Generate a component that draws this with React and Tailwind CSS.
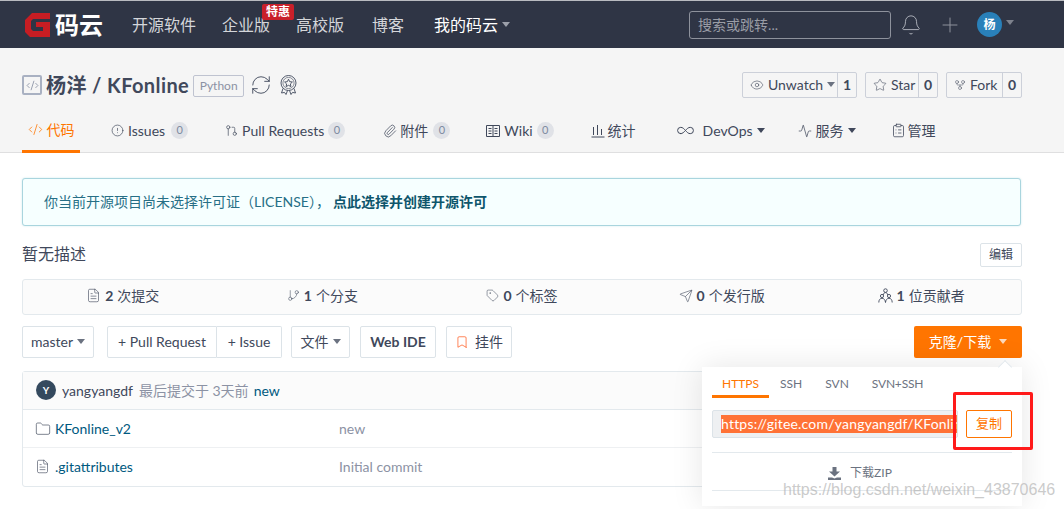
import {
  Activity, Bell, Bookmark, CircleAlert, CodeXml, Eye, FileText,
  Folder, GitBranch, GitFork, GitPullRequest, Infinity as InfinityIcon, Paperclip, Plus, RefreshCw, Send, Star,
  Tag, ClipboardList,
} from "lucide-react"

const font = "font-['Lato','Noto_Sans_CJK_SC',sans-serif]"

function Caret({ className = "border-t-[#6b7280]" }) {
  return <span className={"inline-block w-0 h-0 border-x-[4px] border-x-transparent border-t-[5px] " + className} />
}

function Count({ children }) {
  return (
    <span className="flex items-center justify-center w-[17px] h-[17px] rounded-full bg-[#e0e2e7] text-[11px] text-[#7d8aa0]">
      {children}
    </span>
  )
}

function Tab({ icon, label, count, caret, className = "", countClass = "ml-[6px]" }) {
  return (
    <div className={"flex items-center text-[14px] text-[#40485b] " + className}>
      {icon}
      <span>{label}</span>
      {count !== undefined && <span className={countClass}><Count>{count}</Count></span>}
      {caret && <span className="ml-[4px] flex"><Caret className="border-t-[#40485b]" /></span>}
    </div>
  )
}

function Social({ icon, label, caret, count, className = "" }) {
  return (
    <div className={"flex h-[26px] items-stretch rounded-[2px] border border-[#ccd0d9] text-[14px] text-[#40485b] " + className}>
      <div className="flex min-w-0 flex-1 items-center pl-[7px] gap-[4px] pb-[1px]">
        {icon}
        <span>{label}</span>
        {caret && <Caret />}
      </div>
      <div className="flex w-[19px] shrink-0 items-center justify-center border-l border-[#ccd0d9] font-bold pb-[1px]">{count}</div>
    </div>
  )
}

function Stat({ icon, num, label }) {
  return (
    <div className="flex flex-1 items-center justify-center gap-[4px] pb-[3px] text-[14px] text-[#40485b]">
      {icon}
      <b className="font-bold">{num}</b>
      <span>{label}</span>
    </div>
  )
}

function Btn({ children, className = "" }) {
  return (
    <div className={"flex h-[32px] items-center justify-center rounded-[2px] border border-[#dce3e8] bg-white pb-[1px] text-[14px] text-[#40485b] " + className}>
      {children}
    </div>
  )
}

function BadgeIcon() {
  return (
    <svg width="19" height="20" viewBox="0 0 19 20" fill="none" stroke="#40485b" strokeWidth="0.9" className="ml-[7px]">
      <circle cx="9.5" cy="8" r="7.5" />
      <circle cx="9.5" cy="8" r="5.6" strokeWidth="0.6" />
      <path d="M9.5 4.2l1.2 2.5 2.7.3-2 1.9.5 2.7-2.4-1.3-2.4 1.3.5-2.7-2-1.9 2.7-.3z" />
      <path d="M4 13.5L2.5 18l3-.6L7 19.5l1.5-4M15 13.5l1.5 4.5-3-.6-1.5 2.1-1.5-4" />
    </svg>
  )
}

function WikiIcon() {
  return (
    <svg width="14" height="12" viewBox="0 0 14 12" fill="none" stroke="#40485b" className="mr-[4px]">
      <path d="M.5.5h13v11H.5zM7 .5v11M2.5 3.5h3M2.5 6h3M2.5 8.5h3M8.5 3.5h3M8.5 6h3M8.5 8.5h3" />
    </svg>
  )
}

function BarsIcon() {
  return (
    <svg width="14" height="14" viewBox="0 0 14 14" fill="none" stroke="#40485b" className="mr-[3px]">
      <path d="M.5 13h13M2.5 3v8M6.5 1v10M10.5 5v6" />
    </svg>
  )
}

function PeopleIcon() {
  return (
    <svg width="15" height="15" viewBox="0 0 15 15" fill="none" stroke="#40485b" strokeWidth="0.9">
      <circle cx="7.5" cy="2.6" r="1.8" />
      <circle cx="4" cy="8" r="1.6" />
      <circle cx="11" cy="8" r="1.6" />
      <path d="M.8 14.5c0-2.6 1.2-4.2 3.2-4.2s3.2 1.6 3.5 4.2c.3-2.6 1.5-4.2 3.5-4.2s3.2 1.6 3.2 4.2M5.2 7c.3-1.5 1-2.4 2.3-2.4S9.500 5.500 9.800 7" />
    </svg>
  )
}

function DownloadIcon() {
  return (
    <svg width="13" height="13" viewBox="0 0 13 13" fill="#6b7280">
      <path d="M4.500 0h4v4.500H12L6.500 9.500 1 4.500h3.500zM0 10.500h4l2.500 1 2.500-1h4V13H0z" />
    </svg>
  )
}

export default function App() {
  return (
    <div className={"relative h-[509px] w-full overflow-hidden bg-white " + font}>
      <nav className="flex h-[48px] items-center border-t border-[#b9bbc0] bg-[#2f3545] pl-[25px]">
        <div className="flex w-[107px] items-center">
          <svg width="25" height="24" viewBox="0 0 25 24">
            <path d="M7 0H25V6H8L6 8V16L8 18H18V14H11V9H25V24H5L0 19V7Z" fill="#c71d23" />
          </svg>
          <span className="ml-[5px] text-[24px] font-bold leading-none text-white">码云</span>
        </div>
        <div className="relative flex items-center text-[16px] text-[#d4d6da]">
          <span>开源软件</span>
          <span className="relative ml-[26px]">
            企业版
            <span className="absolute left-[40px] top-[-9px] w-[32px] rounded-[2px] bg-[#c9202a] text-center text-[12px] font-bold leading-[16px] text-white">特惠</span>
          </span>
          <span className="ml-[26px]">高校版</span>
          <span className="ml-[28px]">博客</span>
          <span className="ml-[30px] flex items-center gap-[4px] text-white">我的码云<Caret className="border-t-[#9ca0aa]" /></span>
        </div>
        <div className="ml-[179px] flex h-[28px] w-[202px] items-center rounded-[3px] border border-[#8e929c] pl-[8px] text-[14px] text-[#9a9da6]">
          搜索或跳转...
        </div>
        <Bell size={22} strokeWidth={1} className="ml-[9px] text-[#b4b7bf]" />
        <Plus size={24} strokeWidth={1} className="ml-[16px] text-[#8e929c]" />
        <div className="ml-[15px] flex h-[25px] w-[25px] items-center justify-center rounded-full bg-[#2980b9] text-[12px] font-bold text-white">杨</div>
        <span className="ml-[4px] mb-[4px] flex"><Caret className="border-t-[#7e828d]" /></span>
      </nav>

      <header className="h-[105px] border-b border-[#dfdfe0] bg-[#f5f5f5] pl-[22px] pr-[42px]">
        <div className="flex h-[50px] items-end">
          <div className="flex h-[26px] items-center">
            <div className="flex h-[20px] w-[20px] items-center justify-center rounded-[2px] border-2 border-[#a9b1c2]">
              <CodeXml size={13} strokeWidth={1.25} className="text-[#6d7890]" />
            </div>
            <span className="ml-[4px] text-[20px] font-bold tracking-[0.4px] text-[#40485b]">杨洋 / KFonline</span>
            <span className="ml-[4px] mt-[2px] flex h-[22px] w-[51px] items-center justify-center rounded-[2px] border border-[#bfc3d0] text-[12px] text-[#8c92a4]">Python</span>
            <RefreshCw size={22} strokeWidth={1} className="ml-[6px] text-[#40485b]" />
            <BadgeIcon />
          </div>
          <div className="ml-auto flex gap-[8px]">
            <Social className="w-[115px]" icon={<Eye size={14} strokeWidth={1} />} label="Unwatch" caret count="1" />
            <Social className="w-[73px]" icon={<Star size={14} strokeWidth={1} />} label="Star" count="0" />
            <Social className="w-[76px]" icon={<GitFork size={12} strokeWidth={1} />} label="Fork" count="0" />
          </div>
        </div>
        <div className="mt-[11px] flex h-[44px] items-center">
          <div className="flex h-[44px] w-[58px] items-center justify-center gap-[4px] border-b-[3px] border-[#ff7500] text-[14px] text-[#ff7500]">
            <CodeXml size={15} strokeWidth={1.25} />代码
          </div>
          <div className="flex items-center pb-[1px]">
            <Tab className="ml-[31px]" icon={<CircleAlert size={13} strokeWidth={1.25} className="mr-[4px]" />} label="Issues" count="0" />
            <Tab className="ml-[37px]" icon={<GitPullRequest size={13} strokeWidth={1.25} className="mr-[4px]" />} label="Pull Requests" countClass="ml-[4px]" count="0" />
            <Tab className="ml-[38px]" icon={<Paperclip size={14} strokeWidth={1.25} className="mr-[3px]" />} label="附件" countClass="ml-[5px]" count="0" />
            <Tab className="ml-[36px]" icon={<WikiIcon />} label="Wiki" countClass="ml-[4px]" count="0" />
            <Tab className="ml-[37px]" icon={<BarsIcon />} label="统计" />
            <Tab className="ml-[40px]" icon={<InfinityIcon size={19} strokeWidth={1.25} className="mr-[8px]" />} label="DevOps" caret />
            <Tab className="ml-[33px]" icon={<Activity size={14} strokeWidth={1.25} className="mr-[4px]" />} label="服务" caret />
            <Tab className="ml-[35px]" icon={<ClipboardList size={15} strokeWidth={1.25} className="mr-[2px]" />} label="管理" />
          </div>
        </div>
      </header>

      <main className="pl-[22px] pr-[42px]">
        <div className="mr-[1px] mt-[25px] flex h-[48px] items-center rounded-[3px] border border-[#a9d5de] bg-[#f6ffff] pb-[2px] pl-[21px] text-[14px] text-[#276f86] shadow-[0_0_2px_rgba(169,213,222,0.6)]">
          你当前开源项目尚未选择许可证（LICENSE），
          <b className="ml-[3px] font-bold text-[#0e566c]">点此选择并创建开源许可</b>
        </div>

        <div className="mt-[17px] flex h-[24px] items-center justify-between">
          <span className="pb-[2px] text-[16px] text-[#40485b]">暂无描述</span>
          <div className="flex h-[24px] w-[42px] items-center justify-center rounded-[2px] border border-[#dce3e8] text-[12px] text-[#40485b]">编辑</div>
        </div>

        <div className="mt-[12px] flex h-[36px] rounded-[3px] border border-[#e3e9ed] bg-[#fbfbfb]">
          <Stat icon={<FileText size={15} strokeWidth={1} />} num="2" label="次提交" />
          <Stat icon={<GitBranch size={13} strokeWidth={1} />} num="1" label="个分支" />
          <Stat icon={<Tag size={13} strokeWidth={1} />} num="0" label="个标签" />
          <Stat icon={<Send size={14} strokeWidth={1} />} num="0" label="个发行版" />
          <Stat icon={<PeopleIcon />} num="1" label="位贡献者" />
        </div>

        <div className="mt-[11px] flex">
          <Btn className="w-[72px] gap-[4px]">master<Caret /></Btn>
          <div className="ml-[13px] flex">
            <Btn className="w-[110px] rounded-r-none">+ Pull Request</Btn>
            <Btn className="w-[65px] rounded-l-none border-l-0">+ Issue</Btn>
          </div>
          <Btn className="ml-[9px] w-[59px] gap-[4px]">文件<Caret /></Btn>
          <Btn className="ml-[10px] w-[76px] font-bold">Web IDE</Btn>
          <Btn className="ml-[10px] w-[66px] gap-[6px]"><Bookmark size={14} strokeWidth={1.25} className="text-[#ff5a1f]" />挂件</Btn>
          <div className="ml-auto flex h-[32px] w-[108px] items-center justify-center gap-[8px] rounded-[2px] bg-[#ff7500] pb-[1px] text-[14px] text-white">
            克隆/下载<Caret className="border-t-[#fbd9bd]" />
          </div>
        </div>

        <div className="mt-[13px] rounded-[3px] border border-[#e3e9ed]">
          <div className="flex h-[38px] items-center border-b border-[#e3e9ed] bg-[#fbfbfb] pl-[13px] pb-[1px] text-[14px]">
            <div className="flex h-[20px] w-[20px] items-center justify-center rounded-full bg-[#34495e] text-[10px] font-bold text-white">Y</div>
            <span className="ml-[6px] text-[#40485b]">yangyangdf</span>
            <span className="ml-[6px] text-[#8c92a4]">最后提交于 3天前</span>
            <span className="ml-[5px] text-[#005980]">new</span>
          </div>
          <div className="flex h-[38px] items-center border-b border-[#eef0f2] pl-[12px] text-[14px]">
            <Folder size={16} strokeWidth={1} className="text-[#40485b]" />
            <span className="ml-[4px] w-[284px] text-[#005980]">KFonline_v2</span>
            <span className="text-[#8c92a4]">new</span>
          </div>
          <div className="flex h-[38px] items-center pl-[12px] pb-[1px] text-[14px]">
            <FileText size={15} strokeWidth={1} className="text-[#40485b]" />
            <span className="ml-[5px] w-[284px] text-[#005980]">.gitattributes</span>
            <span className="text-[#8c92a4]">Initial commit</span>
          </div>
        </div>
      </main>

      {/* 克隆弹层 */}
      <div className="absolute left-[702px] top-[367px] h-[139px] w-[320px] bg-white px-[10px] shadow-[0_0_30px_rgba(0,0,0,0.1)]">
        <div className="absolute right-[12px] top-[-5px] h-[10px] w-[10px] rotate-45 border-l border-t border-[#e3e9ed] bg-white" />
        <div className="flex h-[31px] items-start text-[12px] text-[#6b7280]">
          <span className="flex h-[31px] w-[57px] justify-center border-b-[3px] border-[#ff7500] pt-[9px] leading-[16px] text-[#ff7500]">HTTPS</span>
          <span className="ml-[11px] pt-[9px] leading-[16px]">SSH</span>
          <span className="ml-[23px] pt-[9px] leading-[16px]">SVN</span>
          <span className="ml-[23px] pt-[9px] leading-[16px] tracking-[-0.2px]">SVN+SSH</span>
        </div>
        <div className="mt-[12px] flex items-center">
          <div className="flex h-[28px] w-[246px] items-center overflow-hidden rounded-[2px] border border-[#dce3e8] bg-[#eef0f2] pl-[8px]">
            <span className="whitespace-nowrap bg-[#ff7236] text-[14px] leading-[18px] tracking-[0.2px] text-white">https://gitee.com/yangyangdf/KFonline_v2.git</span>
          </div>
          <div className="ml-[8px] flex h-[28px] w-[46px] items-center justify-center rounded-[2px] border border-[#ff7500] text-[13px] text-[#ff7500]">复制</div>
        </div>
        <div className="mt-[14px] h-px bg-[#e3e9ed]" />
        <div className="flex h-[37px] items-center justify-center gap-[9px] pr-[4px] pt-[3px] text-[12px] text-[#6b7280]">
          <DownloadIcon />下载ZIP
        </div>
        <div className="h-px bg-[#e3e9ed]" />
      </div>

      <div className="absolute left-[953px] top-[392px] h-[58px] w-[80px] rounded-[2px] border-[3px] border-[#ff1a1a]" />
      <div className="absolute left-[783px] top-[480px] font-['Liberation_Sans',sans-serif] text-[16px] leading-[20px] whitespace-nowrap text-[#b4b4b4]/70">
        https://blog.csdn.net/weixin_43870646
      </div>
    </div>
  )
}
